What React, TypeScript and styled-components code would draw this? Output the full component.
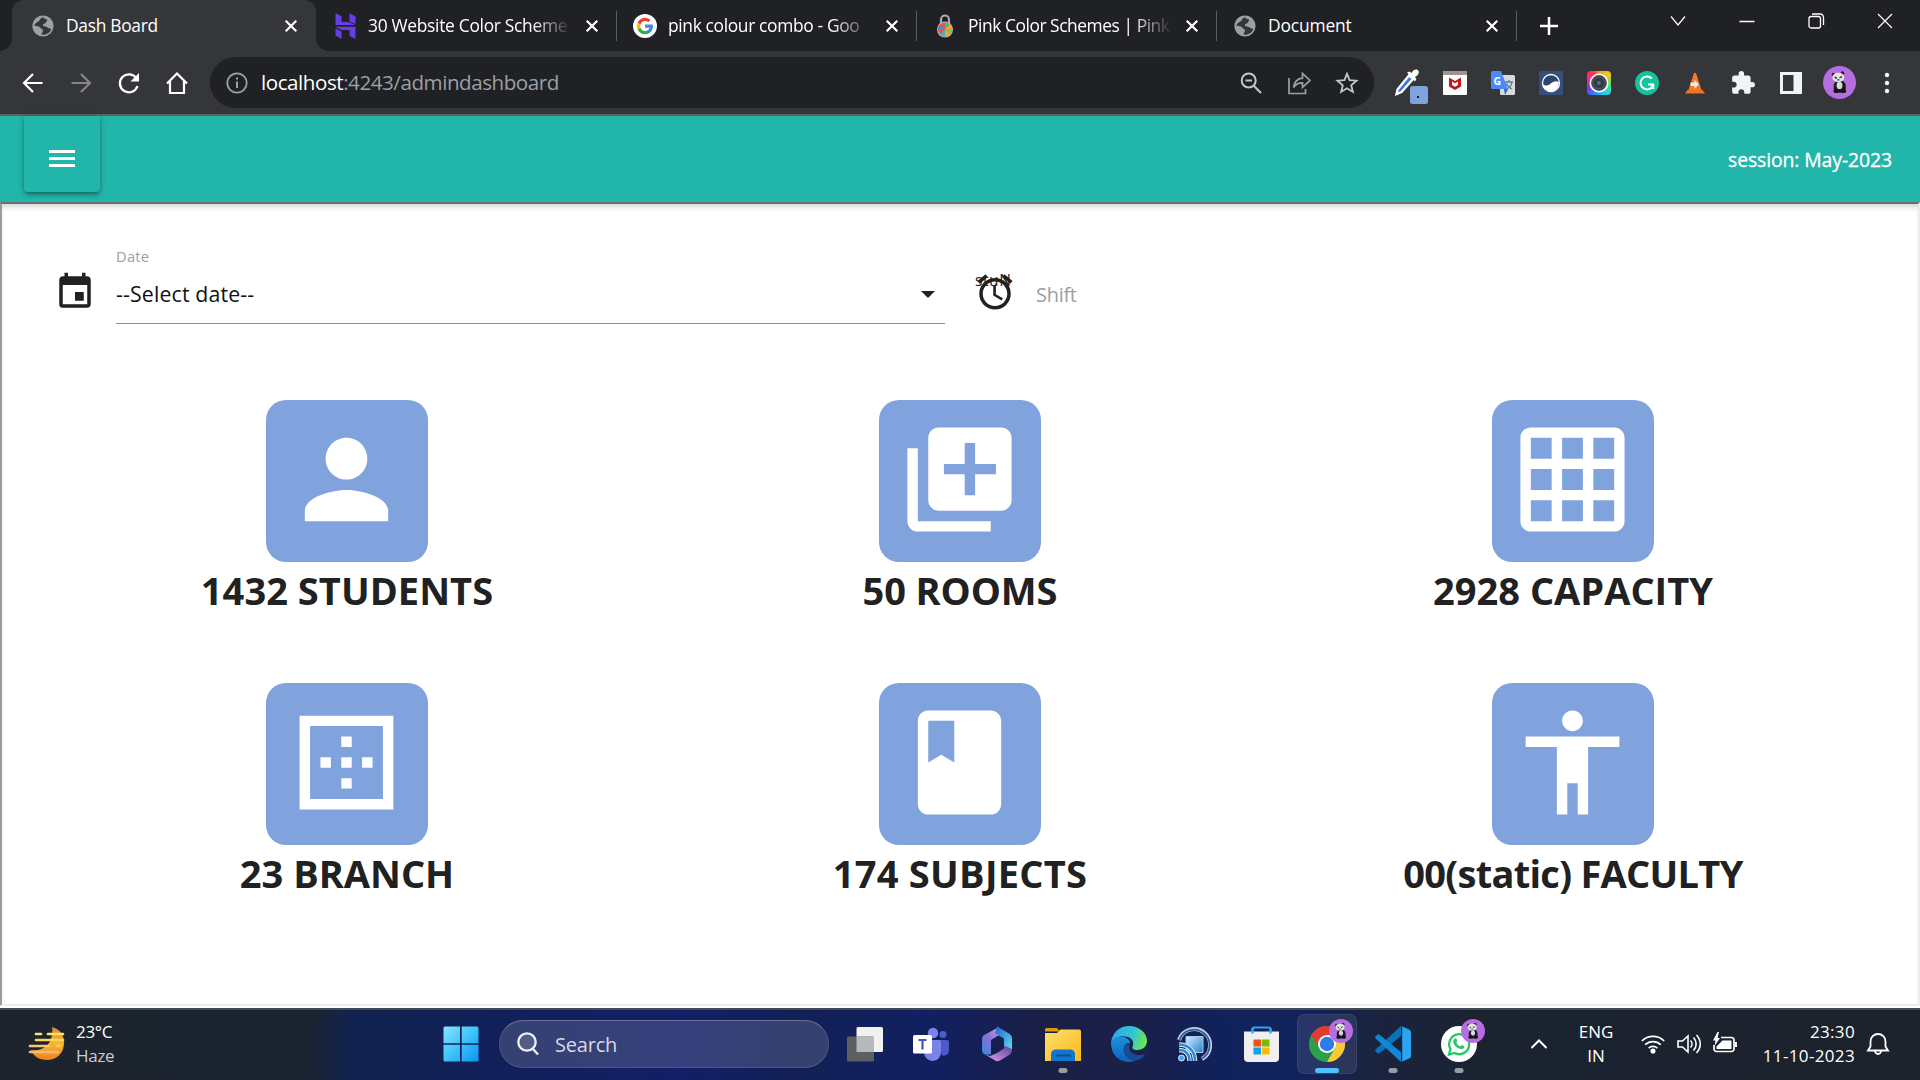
import React from "react";
import styled, { createGlobalStyle } from "styled-components";
import {
  MdPerson,
  MdLibraryAdd,
  MdGridOn,
  MdBorderOuter,
  MdBook,
  MdAccessibility,
  MdEvent,
  MdAccessAlarm,
  MdExtension,
} from "react-icons/md";

const Global = createGlobalStyle`
  * { box-sizing: border-box; }
  body { margin: 0; background: #fff; }
  svg { display: block; flex: none; overflow: visible; }
`;

const Screen = styled.div`
  width: 1920px;
  height: 1080px;
  display: flex;
  flex-direction: column;
  overflow: hidden;
  font-family: "Open Sans", "Noto Sans", sans-serif;
`;

/* ---------- browser tabs ---------- */

const TabStrip = styled.div`
  height: 51px;
  flex: none;
  display: flex;
  align-items: stretch;
  background: #202124;
  padding-left: 12px;
`;

const Tab = styled.div<{ $active?: boolean }>`
  position: relative;
  flex: none;
  width: ${(p) => (p.$active ? 304 : 300)}px;
  padding: 0 ${(p) => (p.$active ? 19 : 18)}px 0 ${(p) => (p.$active ? 19 : 17)}px;
  display: flex;
  align-items: center;
  background: ${(p) => (p.$active ? "#35363a" : "transparent")};
  border-radius: 12px 12px 0 0;
  ${(p) =>
    p.$active
      ? `
    &::before, &::after {
      content: "";
      position: absolute;
      bottom: 0;
      width: 12px;
      height: 12px;
    }
    &::before { left: -12px; background: radial-gradient(circle at 0 0, transparent 11.5px, #35363a 12px); }
    &::after { right: -12px; background: radial-gradient(circle at 100% 0, transparent 11.5px, #35363a 12px); }
  `
      : ""}
`;

const TabRule = styled.div`
  flex: none;
  width: 1px;
  height: 30px;
  margin: 11px -1px 0 0;
  background: #5a5c60;
`;

const Favicon = styled.div`
  flex: none;
  width: 24px;
  display: flex;
  justify-content: center;
`;

const TabTitle = styled.div<{ $spacing: number; $fade?: boolean }>`
  flex: 1;
  margin-left: 11px;
  padding-bottom: 2px;
  white-space: nowrap;
  color: #fff;
  font-size: 17.4px;
  line-height: 28px;
  letter-spacing: ${(p) => p.$spacing}px;
  ${(p) => (p.$fade ? "mask-image: linear-gradient(90deg, #000 164px, transparent 204px);" : "")}
`;

const WindowControls = styled.div`
  display: flex;
  align-items: center;
  margin-left: 111px;
  height: 42px;
  gap: 51px;
`;

const NewTab = styled.div`
  display: flex;
  align-items: center;
  margin-left: 24px;
`;

/* ---------- toolbar ---------- */

const Toolbar = styled.div`
  height: 65px;
  flex: none;
  display: flex;
  align-items: center;
  background: #35363a;
  border-bottom: 2px solid #5f6062;
`;

const NavButtons = styled.div`
  display: flex;
  width: 210px;
  padding-left: 21px;
  gap: 24px;
`;

const Omnibox = styled.div`
  width: 1164px;
  height: 51px;
  border-radius: 26px;
  background: #202124;
  display: flex;
  align-items: center;
  padding: 0 15px;
`;

const Url = styled.div`
  flex: 1;
  margin-left: 12px;
  padding-bottom: 2px;
  color: #fff;
  font-size: 20.6px;
  letter-spacing: -0.46px;
  line-height: 30px;
  span { color: #9aa0a6; }
`;

const OmniActions = styled.div`
  display: flex;
  gap: 24px;
`;

const Extensions = styled.div`
  display: flex;
  padding-left: 9px;
`;

const ExtCell = styled.div`
  width: 48px;
  height: 48px;
  display: flex;
  align-items: center;
  justify-content: center;
`;

/* ---------- page ---------- */

const Header = styled.header`
  height: 86px;
  flex: none;
  display: flex;
  justify-content: space-between;
  background: #22b5a9;
  padding: 0 28px 0 24px;
`;

const MenuButton = styled.button`
  width: 76px;
  height: 76px;
  padding: 10px 0 0;
  border: 0;
  border-radius: 0 0 4px 4px;
  background: #22b5a9;
  color: #fff;
  display: flex;
  justify-content: center;
  align-items: center;
  padding: 10px 0 0;
  box-shadow: 0 3px 4px -1px rgba(0, 0, 0, 0.35), 0 1px 6px rgba(0, 0, 0, 0.2);
`;

const Bars = styled.span`
  width: 26px;
  height: 17px;
  margin-top: -1px;
  display: flex;
  flex-direction: column;
  justify-content: space-between;
  i { height: 3px; background: #fff; }
`;

const Session = styled.div`
  color: #fff;
  font-size: 19.4px;
  line-height: 28px;
  letter-spacing: -0.1px;
  margin-top: 30px;
  -webkit-text-stroke: 0.3px #fff;
`;

const Frame = styled.main`
  height: 804px;
  flex: none;
  border: 2px solid;
  border-color: #6d6d6d #ececec #ececec #9a9a9a;
  background: #fff;
  box-shadow: inset 0 5px 5px -2px rgba(0, 0, 0, 0.16);
`;

const Gap = styled.div`
  height: 2px;
  flex: none;
  background: #fff;
`;

const Filters = styled.div`
  display: flex;
  height: 196px;
  padding: 38px 0 0 52px;
`;

const IconSlot = styled.div`
  position: relative;
  margin-top: 29px;
  color: #212121;
`;

const SelectField = styled.div`
  width: 829px;
  height: 82px;
  margin-left: 20px;
  border-bottom: 1px solid #8f8f8f;
`;

const FieldLabel = styled.div`
  color: #9e9e9e;
  font-size: 14.8px;
  line-height: 20px;
  padding-top: 4px;
  letter-spacing: 0.2px;
`;

const FieldValue = styled.div`
  display: flex;
  justify-content: space-between;
  align-items: center;
  padding-right: 10px;
  margin-top: 13px;
  color: #111;
  font-size: 21.3px;
  line-height: 30px;
  letter-spacing: 0.15px;
`;

const Caret = styled.i`
  border: 7px solid transparent;
  border-top-color: #212121;
  border-bottom: 0;
`;

const AlarmSlot = styled(IconSlot)`
  margin-left: 29px;
  width: 42px;
`;

const GhostText = styled.span`
  position: absolute;
  left: 1px;
  top: -1px;
  font-size: 15.5px;
  letter-spacing: 0.6px;
  line-height: 20px;
  color: #222;
`;

const ShiftLabel = styled.div`
  margin: 40px 0 0 20px;
  color: #9e9e9e;
  font-size: 20px;
  letter-spacing: -0.3px;
  line-height: 26px;
`;

const Stats = styled.section`
  display: grid;
  grid-template-columns: repeat(3, 613px);
  grid-auto-rows: 283px;
  justify-content: center;
`;

const Stat = styled.div`
  display: flex;
  flex-direction: column;
  align-items: center;
`;

const Tile = styled.div`
  width: 162px;
  height: 162px;
  border-radius: 20px;
  background: #80a3dd;
  color: #fff;
  display: flex;
  align-items: center;
  justify-content: center;
  padding: 0 1px 3px 0;
`;

const StatName = styled.h1<{ $spacing: number }>`
  margin: 2px 0 0;
  font-size: 38px;
  line-height: 52px;
  font-weight: 700;
  color: #212121;
  white-space: nowrap;
  letter-spacing: ${(p) => p.$spacing}px;
`;

/* ---------- taskbar ---------- */

const Taskbar = styled.footer`
  height: 72px;
  flex: none;
  display: flex;
  align-items: center;
  padding-bottom: 2px;
  border-top: 2px solid #424a56;
  background: linear-gradient(
    90deg,
    #1e242e 0,
    #1b2430 310px,
    #12234f 350px,
    #11205a 500px,
    #131f66 680px,
    #132056 800px,
    #122062 930px,
    #191f45 1040px,
    #1a2048 1130px,
    #112159 1210px,
    #12225a 1310px,
    #1a2340 1370px,
    #1b2331 1480px,
    #1d222b 1920px
  );
`;

const Weather = styled.div`
  width: 435px;
  padding-left: 28px;
  display: flex;
  align-items: center;
  gap: 10px;
`;

const TwoLines = styled.div<{ $spacing?: number }>`
  color: #fff;
  font-size: 17px;
  line-height: 24px;
  letter-spacing: ${(p) => p.$spacing ?? -0.3}px;
  white-space: nowrap;
  em { font-style: normal; color: #c9ccd2; }
`;

const Language = styled(TwoLines)`
  width: 60px;
  margin: 0 15px 0 18px;
  text-align: center;
`;

const Clock = styled(TwoLines)`
  width: 94px;
  margin-right: 12px;
  display: flex;
  flex-direction: column;
  align-items: flex-end;
`;

const StartButton = styled.div`
  width: 64px;
  padding-left: 8px;
`;

const SearchBox = styled.div`
  width: 330px;
  height: 48px;
  border-radius: 24px;
  border: 1px solid rgba(255, 255, 255, 0.12);
  border-top-color: rgba(255, 255, 255, 0.25);
  background: rgba(255, 255, 255, 0.15);
  display: flex;
  align-items: center;
  padding-left: 17px;
  gap: 16px;
  color: #d8dae4;
  font-size: 20px;
  letter-spacing: -0.2px;
`;

const Apps = styled.div`
  display: flex;
  margin-left: 3px;
`;

const AppCell = styled.div<{ $active?: boolean }>`
  position: relative;
  width: 60px;
  height: 60px;
  margin: 0 3px;
  border-radius: 7px;
  display: flex;
  align-items: center;
  justify-content: center;
  background: ${(p) => (p.$active ? "rgba(255,255,255,0.09)" : "transparent")};
  box-shadow: ${(p) => (p.$active ? "inset 0 0 0 1px rgba(255,255,255,0.07)" : "none")};
`;

const Indicator = styled.i<{ $active?: boolean }>`
  position: absolute;
  left: 50%;
  bottom: 1px;
  width: ${(p) => (p.$active ? 24 : 9)}px;
  height: 5px;
  border-radius: 3px;
  transform: translateX(-50%);
  background: ${(p) => (p.$active ? "#4cc2ff" : "#9a9ca3")};
`;

const Badge = styled.div`
  position: absolute;
  right: 4px;
  top: 5px;
`;

const Tray = styled.div`
  display: flex;
  align-items: center;
  margin-left: auto;
  padding-right: 31px;
`;

const TrayIcons = styled.div`
  display: flex;
  gap: 12px;
  margin-right: 24px;
`;

/* ---------- drawings ---------- */

const Globe = () => (
  <svg width="22" height="22" viewBox="0 0 22 22">
    <circle cx="11" cy="11" r="10.6" fill="#9aa0a6" />
    <path
      d="M11.5 2.2C8 2.8 8.2 5 6.8 6.3 5 7.6 2.8 8 2.4 10.5c2 .9 4.200.2 5.800 2 .9 1.600 2.900 1.400 2.800 3.400-.2 1.600-1.600 1.800-1.500 3.700 4 .8 8.600-1.500 9.700-5.600-1.800-1-2.700-.4-3.900-1.700-1.200-1.200-3.300-.4-4.200-1.500-.8-1.300.3-2.200 1.900-2.400 1.300-.3.800-1.800 1.900-2.400 1-.6-.2-1.900-1.200-2.100-1.500-.2-2.400-.7-2.200-1.700z"
      fill="#35363a"
    />
  </svg>
);

const HostingerIcon = () => (
  <svg width="21" height="26" viewBox="0 0 21 26" fill="#673de6">
    <path d="M.5 0 6.500 3.300V9h7.800l5.700 3H.5zM14.500 0l6 3.500v7.800l-6-3zM.5 13.700l5.300 0h14.700V26l-6-3.200V17H6.600L.5 14zM.5 15.300l6 3.200V26l-6-3.400z" />
  </svg>
);

const GoogleMark = () => (
  <>
    <path d="M21.600 12.200c0-.7-.1-1.400-.2-2H12v3.900h5.400a4.600 4.600 0 0 1-2 3v2.500h3.200c1.900-1.700 3-4.300 3-7.400z" fill="#4285f4" />
    <path d="M12 22c2.700 0 5-.9 6.600-2.400l-3.200-2.500c-.9.6-2 1-3.400 1-2.600 0-4.800-1.800-5.600-4.100H3.100v2.600A10 10 0 0 0 12 22z" fill="#34a853" />
    <path d="M6.400 14a6 6 0 0 1 0-3.900V7.500H3.100a10 10 0 0 0 0 9z" fill="#fbbc05" />
    <path d="M12 6c1.500 0 2.800.5 3.800 1.500l2.900-2.900A10 10 0 0 0 3.100 7.500l3.300 2.600C7.200 7.800 9.400 6 12 6z" fill="#ea4335" />
  </>
);

const GoogleIcon = () => (
  <svg width="24" height="24" viewBox="0 0 24 24">
    <circle cx="12" cy="12" r="12" fill="#fff" />
    <g transform="translate(2.200 2.200) scale(.82)">
      <GoogleMark />
    </g>
  </svg>
);

const LockWheel = () => (
  <svg width="18" height="24" viewBox="0 0 18 24">
    <path d="M5 11V5.500a4 4 0 0 1 8 0V11" fill="none" stroke="#aaa" strokeWidth="2.200" />
    <circle cx="9" cy="15.500" r="8" fill="#bbb" />
    <circle cx="9" cy="15.500" r="7" fill="#e9573f" />
    <path d="M9 15.500 9 8.500A7 7 0 0 1 14 10.500z" fill="#37bc9b" />
    <path d="M9 15.500 16 15.500A7 7 0 0 1 14 20.500z" fill="#8cc152" />
    <path d="M9 15.500 14 20.500A7 7 0 0 1 9 22.500z" fill="#f6a623" />
    <path d="M9 15.500 9 22.500A7 7 0 0 1 4 20.500z" fill="#3bafda" />
    <path d="M9 15.500 2 15.500A7 7 0 0 1 4 10.500z" fill="#4a89dc" />
    <path d="M9 15.500 14 10.500A7 7 0 0 1 16 15.500z" fill="#f6a623" />
  </svg>
);

const CloseX = () => (
  <svg width="12" height="12" viewBox="0 0 12 12" stroke="#fff" strokeWidth="2.200">
    <path d="M.7.7l10.600 10.600M11.300.7.7 11.300" />
  </svg>
);

const stroke = (color: string, w: number) => ({
  fill: "none",
  stroke: color,
  strokeWidth: w,
});

const Panda = ({ size }: { size: number }) => (
  <svg width={size} height={size} viewBox="0 0 34 34">
    <circle cx="17" cy="17" r="17" fill="#b56ee0" />
    <path d="M11 21c0-4 2.500-6 6-6s6.500 2 6.500 6c0 3-.3 5-1 6.500h-10.500C11.300 26 11 24 11 21z" fill="#1c1c1e" />
    <ellipse cx="17" cy="20" rx="3" ry="3.800" fill="#d9dadc" />
    <ellipse cx="13.300" cy="26" rx="2.700" ry="1.800" fill="#111" />
    <ellipse cx="21.300" cy="26" rx="2.700" ry="1.800" fill="#111" />
    <circle cx="10.800" cy="8.800" r="1.900" fill="#222" />
    <circle cx="20" cy="7.400" r="1.900" fill="#222" />
    <ellipse cx="15.800" cy="11.800" rx="6.200" ry="4.900" fill="#e3e3e3" />
    <path d="M12 11.500l2.300 1.300M17 12.100l2.500-1.200M14.800 14.300h2" stroke="#222" strokeWidth="1.300" />
  </svg>
);

const Eyedropper = () => (
  <svg width="28" height="36" viewBox="6 0 28 36">
    <g transform="translate(6 1)">
      <path d="M4.500 23.500 16 9.500l4 3.500L8.500 26 3.500 28z" fill="#3c78d8" stroke="#fff" strokeWidth="2.300" />
      <path d="M14 6.500l2.500-1 2 1.600c2-4.200 6-4.300 7-2 .8 2-.3 4.500-3.600 6l1.500 2-1.500 2.500z" fill="#fff" />
      <rect x="17" y="20" width="18" height="18" rx="2.500" fill="#80a3dd" />
      <rect x="24" y="30" width="2" height="2" fill="#16202e" />
    </g>
  </svg>
);

const McAfee = () => (
  <svg width="24" height="24" viewBox="0 0 24 24">
    <rect width="24" height="24" rx="1" fill="#fff" />
    <path d="M0 0h24v4H0z" fill="#9c9694" />
    <path d="M6 6.500l6 3.500 6-3.500v9L12 19l-6-3.500zM9 10.500v3.600l3 1.700 3-1.700v-3.600l-3 1.700z" fill="#c5161d" fillRule="evenodd" />
  </svg>
);

const GlyphText = styled.text`
  font-family: "Open Sans", "Noto Sans CJK SC", sans-serif;
  font-weight: 700;
`;

const Translate = () => (
  <svg width="24" height="24" viewBox="0 0 24 24">
    <rect x="9" y="4" width="15" height="20" rx="1.500" fill="#d8dadd" />
    <path d="M14 11h8M18 9v2M21 11c-.5 3-3 6-5.500 7M15.500 12.500c1 2.500 3 4.500 5.500 5.500" stroke="#5f7f86" strokeWidth="1.300" fill="none" />
    <path d="M13 18h4l-3 6z" fill="#3a5bc7" />
    <path d="M1.500 0H10l7 18H1.500A1.500 1.500 0 0 1 0 16.500v-15A1.500 1.500 0 0 1 1.500 0z" fill="#4c8bf5" />
    <GlyphText x="2.500" y="13.500" fontSize="10.500" fill="#fff">G</GlyphText>
  </svg>
);

const Sphere = () => (
  <svg width="24" height="24" viewBox="0 0 24 24">
    <rect width="24" height="24" rx="1" fill="#344f7c" />
    <circle cx="12" cy="12" r="8.500" fill="#2d4671" stroke="#fff" strokeWidth="1.300" />
    <path d="M3.700 13c3 2.500 5.800 1.800 8-.4 2-2 5-3.300 8.200-1.600A8 8 0 0 1 3.700 13z" fill="#fff" />
  </svg>
);

const Rainbow = styled.div`
  width: 24px;
  height: 24px;
  border-radius: 4px;
  background: conic-gradient(from 0deg, #ff9b1a, #f7c51e 50deg, #58e06c 90deg, #21d8e0 140deg, #2c7df0 210deg, #7f38f0 240deg, #ff1f9c 290deg, #ff3a3a 335deg, #ff9b1a);
`;

const Lens = () => (
  <Rainbow>
    <svg width="24" height="24" viewBox="0 0 24 24">
      <circle cx="12" cy="12" r="8.700" fill="#474c57" stroke="#fff" strokeWidth="1.600" />
      <circle cx="12" cy="12" r="5" fill="#2b3d49" />
      <circle cx="12" cy="12" r="2" fill="#596c7a" />
    </svg>
  </Rainbow>
);

const Grammarly = () => (
  <svg width="24" height="24" viewBox="0 0 24 24">
    <circle cx="12" cy="12" r="12" fill="#15c39a" />
    <path d="M16.800 7.500A6.500 6.500 0 1 0 18 14.500M13 13.500h5.200v4.500" {...stroke("#fff", 2)} />
  </svg>
);

const Vlc = () => (
  <svg width="20" height="22" viewBox="0 0 20 22">
    <path d="M9 1h2l5.500 17H3.500z" fill="#f07c28" />
    <path d="M2.500 18h15l2.500 3.500H0z" fill="#ee7420" />
    <path d="M5.500 10.500h4V7.800l4.500 4.700-4.500 4.300V14h-4z" fill="#e9e9ea" />
  </svg>
);

const SidePanel = () => (
  <svg width="22" height="22" viewBox="0 0 22 22">
    <path d="M0 0h22v22H0zM3 3v16h10.500V3z" fill="#f1f3f4" fillRule="evenodd" />
  </svg>
);

const Haze = () => (
  <svg width="38" height="36" viewBox="0 0 38 36">
    <defs>
      <linearGradient id="moon" x1="0" y1="0" x2="0" y2="1">
        <stop offset="0" stopColor="#d98a3c" />
        <stop offset=".5" stopColor="#f5b928" />
        <stop offset="1" stopColor="#f07f1b" />
      </linearGradient>
    </defs>
    <path d="M24 1c8 2 12 8 12 16 0 10-7 17-17 17-8 0-14-4-16-10 14 2 23-8 21-23z" fill="url(#moon)" />
    <g strokeWidth="2.700" strokeLinecap="round">
      <path d="M8 8h5M20 8h15" stroke="#ffdf73" />
      <path d="M8 14h27" stroke="#ffd35c" />
      <path d="M2 20h19M29 20h3" stroke="#f6c878" />
      <path d="M2 26h28" stroke="#f1ba7c" />
    </g>
  </svg>
);

const WindowsLogo = () => (
  <svg width="36" height="36" viewBox="0 0 36 36">
    <defs>
      <linearGradient id="win" x1="0" y1="0" x2="1" y2="1">
        <stop offset="0" stopColor="#8be3ff" />
        <stop offset=".5" stopColor="#3fc3fa" />
        <stop offset="1" stopColor="#0a93f5" />
      </linearGradient>
    </defs>
    <path
      d="M2 .5h15v16.700H.5V2A1.500 1.500 0 0 1 2 .5zM18.700.5H34A1.500 1.500 0 0 1 35.500 2v15.200H18.700zM.5 18.800H17v16.700H2A1.500 1.500 0 0 1 .5 34zM18.700 18.800h16.800V34a1.500 1.500 0 0 1-1.500 1.500H18.700z"
      fill="url(#win)"
    />
  </svg>
);

const TaskView = () => (
  <svg width="36" height="36" viewBox="0 0 36 36">
    <rect x="9.500" y="1" width="26.500" height="25" rx="1.500" fill="#f1f1f1" />
    <rect x="0" y="10.500" width="27" height="25" rx="1.500" fill="#5e5f61" />
    <path d="M9.500 10.500H27V26H9.500z" fill="#b7b8ba" />
  </svg>
);

const Teams = () => (
  <svg width="36" height="36" viewBox="0 0 36 36">
    <circle cx="30" cy="8.500" r="3.600" fill="#5059c9" />
    <path d="M25 14h9a2 2 0 0 1 2 2v8c0 4-3 6-7 5.500z" fill="#5059c9" />
    <circle cx="20" cy="7" r="5.200" fill="#7b83eb" />
    <path d="M12 14h14a2 2 0 0 1 2 2v10a8.500 8.500 0 0 1-17 1z" fill="#7b83eb" />
    <rect x="0" y="9" width="19" height="18.500" rx="1.500" fill="#fff" />
    <path d="M5.500 14h8M9.500 14v9.500" stroke="#4b53bc" strokeWidth="2.200" />
  </svg>
);

const M365 = () => (
  <svg width="34" height="36" viewBox="0 0 34 36">
    <defs>
      <linearGradient id="ma" x1="1" y1="0" x2="0" y2="1">
        <stop offset="0" stopColor="#b9a2f5" />
        <stop offset=".5" stopColor="#8a6fd6" />
        <stop offset="1" stopColor="#2a8fe0" />
      </linearGradient>
      <linearGradient id="mb" x1="0" y1="0" x2="1" y2="1">
        <stop offset="0" stopColor="#2660c9" />
        <stop offset="1" stopColor="#59e2f5" />
      </linearGradient>
      <linearGradient id="mc" x1="0" y1="1" x2="1" y2="0">
        <stop offset="0" stopColor="#e3a1f5" />
        <stop offset="1" stopColor="#574196" />
      </linearGradient>
    </defs>
    <path d="M19 1 5 8.500Q2 10 2 13v11q0 3 3 4.500l6 0V14l8-5z" fill="url(#ma)" />
    <path d="M17 .5l12 7q3 2 3 5v12l-8-4v-8l-9-5z" fill="url(#mb)" />
    <path d="M5 28.500 16 35q2 .6 4-.5l9-5.500q3-2 3-6l-8-3.500v3l-7 4.500-7 3z" fill="url(#mc)" />
  </svg>
);

const Folder = () => (
  <svg width="36" height="36" viewBox="0 0 36 36">
    <defs>
      <linearGradient id="fo" x1="0" y1="0" x2="1" y2="1">
        <stop offset="0" stopColor="#ffdf70" />
        <stop offset="1" stopColor="#fbb917" />
      </linearGradient>
    </defs>
    <path d="M0 3.500A1.500 1.500 0 0 1 1.500 2H12l3 3.500H0z" fill="#dc9a06" />
    <path d="M0 7h12l3.500-3.500H34A2 2 0 0 1 36 5.500V35H0z" fill="url(#fo)" />
    <path d="M6 35V28a4.500 4.500 0 0 1 4.500-4.500h15A4.500 4.500 0 0 1 30 28v7z" fill="#1176cf" />
    <path d="M10 29.500h16" stroke="#0d4f92" strokeWidth="2" />
  </svg>
);

const Edge = () => (
  <svg width="36" height="36" viewBox="0 0 36 36">
    <defs>
      <linearGradient id="ea" x1="0" y1=".3" x2="1" y2=".5">
        <stop offset="0" stopColor="#2ba5ea" />
        <stop offset=".6" stopColor="#35c5d3" />
        <stop offset="1" stopColor="#6bea4c" />
      </linearGradient>
      <linearGradient id="eb" x1="0" y1="0" x2="0" y2="1">
        <stop offset="0" stopColor="#1a93dc" />
        <stop offset="1" stopColor="#1160bd" />
      </linearGradient>
    </defs>
    <path d="M0 17C1 7 8 0 18 0c10.500 0 18 7 18 15 0 5-4 9-9.500 9-4 0-6-1.500-5-3.500 1.700-3 .5-8-4.500-9.500C10 9 3 11 0 17z" fill="url(#ea)" />
    <path d="M0 17c2-5 8-7.500 13-6 4 1.200 6.500 4 6 6-3-.5-6 1.500-6 6 0 6 7 12 13 10.500-3 2-6 2.500-8.500 2.500C7 36 0 27.500 0 17z" fill="url(#eb)" />
    <path d="M19 17c-5 1-8 5-6 10 3 8 13 9 18 5 1.500-1.300 2.500-3 3-4.500-1.500 1-4 1.500-6.500 1.500-6 0-11-4-8.500-12z" fill="#174b94" />
  </svg>
);

const Cast = () => (
  <svg width="36" height="36" viewBox="0 0 36 36">
    <defs>
      <linearGradient id="ca" x1="0" y1="0" x2="1" y2="1">
        <stop offset="0" stopColor="#d2efff" />
        <stop offset="1" stopColor="#267fcd" />
      </linearGradient>
    </defs>
    <path d="M2 14A16 16 0 1 1 25 33" {...stroke("#bfd0e4", 4)} />
    <path d="M2.500 14A15.500 15.500 0 1 1 25 32.500" {...stroke("#315da0", 1.800)} />
    <path d="M9 10.500h17v16H9z" fill="url(#ca)" stroke="#a8c8e8" strokeWidth="1" />
    <path d="M2 18.500c10 0 16 7 16 16.500M2 24c7 0 10.500 4.500 10.500 11" {...stroke("#dbe9f7", 4.500)} />
    <path d="M2 18.500c10 0 16 7 16 16.500M2 24c7 0 10.500 4.500 10.500 11" {...stroke("#2c8bd9", 2.500)} />
    <circle cx="4.500" cy="32" r="3" fill="#45a6ea" stroke="#dbe9f7" />
  </svg>
);

const Store = () => (
  <svg width="35" height="36" viewBox="0 0 35 36">
    <path d="M8.500 9V3a1.500 1.500 0 0 1 1.500-1.500h15A1.500 1.500 0 0 1 26.500 3v6" {...stroke("#22a8f0", 2.200)} />
    <path d="M0 5.500h35V32a4 4 0 0 1-4 4H4a4 4 0 0 1-4-4z" fill="#efefef" />
    <path d="M8.500 2v5.500M26.500 2v5.500" stroke="#22a8f0" strokeWidth="2.200" />
    <path d="M9.500 13.500h7.500v7H9.500z" fill="#f04e1f" />
    <path d="M18 13.500h7.500v7H18z" fill="#7eb801" />
    <path d="M9.500 21.500h7.500v7H9.500z" fill="#0ba3ed" />
    <path d="M18 21.500h7.500v7H18z" fill="#fcb80b" />
  </svg>
);

const Chrome = () => (
  <svg width="36" height="36" viewBox="0 0 36 36">
    <circle cx="18" cy="18" r="18" fill="#2aa14a" />
    <path d="M18 9h15.600A18 18 0 0 1 18 36l7.800-13.500z" fill="#fcc934" />
    <path d="M2.400 9A18 18 0 0 1 33.600 9H18L10.200 22.500z" fill="#e33b2e" />
    <circle cx="18" cy="18" r="9" fill="#fff" />
    <circle cx="18" cy="18" r="7.200" fill="#2b7de9" />
  </svg>
);

const VsCode = () => (
  <svg width="36" height="36" viewBox="0 0 36 36">
    <path d="M26 0v10L4.500 27.300a1.500 1.500 0 0 1-2 0L.6 25.600a1.500 1.500 0 0 1 0-2.200z" fill="#0a73ba" />
    <path d="M26 36V26L4.500 8.700a1.500 1.500 0 0 0-2 0L.6 10.400a1.500 1.500 0 0 0 0 2.200z" fill="#0f87d2" />
    <path d="M26 0l8.500 3.700A2.500 2.500 0 0 1 36 6v24a2.500 2.500 0 0 1-1.500 2.300L26 36c1-.5 1.200-1.500 1.200-3V3c0-1.500-.2-2.500-1.200-3z" fill="#2aa5f2" />
  </svg>
);

const WhatsApp = () => (
  <svg width="36" height="36" viewBox="0 0 36 36">
    <circle cx="18" cy="18" r="18" fill="#fff" />
    <path d="M8 28.500l1.500-5.400A10 10 0 1 1 13.500 27z" {...stroke("#25c768", 2.300)} />
    <path d="M14 12.500c1-.7 1.600 0 2.200 2 .3 1-.9 1.500-.9 2 .9 2 2.200 3.100 4 3.900.7 0 1.200-1.400 1.900-1.300 2.300 1 2.400 1.300 2 2.300-1 2-3.500 2-6 .8-3-1.500-5-4.500-5-6.800 0-1.500.8-2.300 1.800-2.900z" fill="#25c768" />
  </svg>
);

/* ---------- data ---------- */

const tabs = [
  { title: "Dash Board", icon: <Globe />, spacing: -0.3, active: true },
  { title: "30 Website Color Scheme", icon: <HostingerIcon />, spacing: -0.3, fade: true },
  { title: "pink colour combo - Goo", icon: <GoogleIcon />, spacing: -0.35, fade: true },
  { title: "Pink Color Schemes | Pink", icon: <LockWheel />, spacing: -0.45, fade: true },
  { title: "Document", icon: <Globe />, spacing: -0.15 },
];

const stats = [
  { label: "1432 STUDENTS", Icon: MdPerson, spacing: 0.05 },
  { label: "50 ROOMS", Icon: MdLibraryAdd, spacing: -0.1 },
  { label: "2928 CAPACITY", Icon: MdGridOn, spacing: 0 },
  { label: "23 BRANCH", Icon: MdBorderOuter, spacing: 0 },
  { label: "174 SUBJECTS", Icon: MdBook, spacing: 0.28 },
  { label: "00(static) FACULTY", Icon: MdAccessibility, spacing: -0.72 },
];

const extensions = [
  <Eyedropper />,
  <McAfee />,
  <Translate />,
  <Sphere />,
  <Lens />,
  <Grammarly />,
  <Vlc />,
  <MdExtension size={26} color="#f1f3f4" />,
  <SidePanel />,
  <Panda size={33} />,
  <svg width="6" height="22" viewBox="0 0 6 22" fill="#f1f3f4">
    <circle cx="3" cy="3" r="2.200" />
    <circle cx="3" cy="11" r="2.200" />
    <circle cx="3" cy="19" r="2.200" />
  </svg>,
];

const apps = [
  { icon: <TaskView /> },
  { icon: <Teams /> },
  { icon: <M365 /> },
  { icon: <Folder />, running: true },
  { icon: <Edge /> },
  { icon: <Cast /> },
  { icon: <Store /> },
  { icon: <Chrome />, running: true, active: true, badge: true },
  { icon: <VsCode />, running: true },
  { icon: <WhatsApp />, running: true, badge: true },
];

export default function App() {
  return (
    <Screen>
      <Global />
      <TabStrip>
        {tabs.map((t) => (
          <React.Fragment key={t.title}>
            <Tab $active={t.active}>
              <Favicon>{t.icon}</Favicon>
              <TabTitle $spacing={t.spacing} $fade={t.fade}>{t.title}</TabTitle>
              <CloseX />
            </Tab>
            {!t.active && <TabRule />}
          </React.Fragment>
        ))}
        <NewTab>
          <svg width="18" height="18" viewBox="0 0 18 18" {...stroke("#fff", 2.500)}>
            <path d="M9 0v18M0 9h18" />
          </svg>
        </NewTab>
        <WindowControls>
          <svg width="18" height="18" viewBox="0 0 18 18" {...stroke("#fff", 1.200)}><path d="M2 4.500l7 8.500 7-8.500" /></svg>
          <svg width="18" height="18" viewBox="0 0 18 18" {...stroke("#fff", 1.500)}><path d="M1.500 9.500h15" /></svg>
          <svg width="18" height="18" viewBox="0 0 18 18" {...stroke("#fff", 1.300)}>
            <rect x="2" y="4.500" width="11.500" height="11.500" rx="2" />
            <path d="M5 2h8a3.500 3.500 0 0 1 3.500 3.500V13" />
          </svg>
          <svg width="18" height="18" viewBox="0 0 18 18" {...stroke("#fff", 1.200)}><path d="M2 2l14 14M16 2 2 16" /></svg>
        </WindowControls>
      </TabStrip>

      <Toolbar>
        <NavButtons>
          <svg width="24" height="24" viewBox="0 0 24 24" {...stroke("#fff", 2.200)}><path d="M21.500 12H3.500M12 3l-9 9 9 9" /></svg>
          <svg width="24" height="24" viewBox="0 0 24 24" {...stroke("#85868a", 2.200)}><path d="M2.500 12h18M12 3l9 9-9 9" /></svg>
          <svg width="24" height="24" viewBox="0 0 24 24">
            <path d="M19.500 7.500A9 9 0 1 0 20.500 15" {...stroke("#fff", 2.300)} />
            <path d="M22 2v8.500h-8.500z" fill="#fff" />
          </svg>
          <svg width="24" height="24" viewBox="0 0 24 24" {...stroke("#fff", 2.200)}><path d="M2 12.500 12 2.500l10 10M5 10v12h14V10" /></svg>
        </NavButtons>
        <Omnibox>
          <svg width="24" height="24" viewBox="0 0 24 24">
            <circle cx="12" cy="12" r="9.700" {...stroke("#9aa0a6", 1.800)} />
            <path d="M12 10.500V17M12 6.500v2" {...stroke("#9aa0a6", 2)} />
          </svg>
          <Url>localhost<span>:4243/admindashboard</span></Url>
          <OmniActions>
            <svg width="24" height="24" viewBox="0 0 24 24" {...stroke("#c4c7ca", 2)}>
              <circle cx="9.700" cy="9.500" r="7" /><path d="M14.700 14.700 22 22" /><path d="M6.500 9.500h6.500" />
            </svg>
            <svg width="24" height="24" viewBox="0 0 24 24" {...stroke("#9aa0a6", 1.700)}>
              <path d="M2 7v15.500h16.500V18" /><path d="M6.500 16.500C7.500 10.500 11 7.500 15.500 7.200V2.500l7.500 7-7.500 6.800v-4.500c-4-.2-6.700 1.200-9 4.700z" />
            </svg>
            <svg width="24" height="24" viewBox="0 0 24 24" {...stroke("#c4c7ca", 1.800)}>
              <path d="M12 2.800l2.600 6.400 6.900.5-5.300 4.500 1.700 6.700L12 17.300l-5.900 3.600 1.700-6.700L2.500 9.700l6.900-.5z" />
            </svg>
          </OmniActions>
        </Omnibox>
        <Extensions>
          {extensions.map((e, i) => <ExtCell key={i}>{e}</ExtCell>)}
        </Extensions>
      </Toolbar>

      <Header>
        <MenuButton><Bars><i /><i /><i /></Bars></MenuButton>
        <Session>session: May-2023</Session>
      </Header>

      <Frame>
        <Filters>
          <IconSlot><MdEvent size={42} /></IconSlot>
          <SelectField>
            <FieldLabel>Date</FieldLabel>
            <FieldValue>--Select date--<Caret /></FieldValue>
          </SelectField>
          <AlarmSlot>
            <MdAccessAlarm size={42} />
            <GhostText>stuN</GhostText>
          </AlarmSlot>
          <ShiftLabel>Shift</ShiftLabel>
        </Filters>
        <Stats>
          {stats.map(({ label, Icon, spacing }) => (
            <Stat key={label}>
              <Tile><Icon size={125} /></Tile>
              <StatName $spacing={spacing}>{label}</StatName>
            </Stat>
          ))}
        </Stats>
      </Frame>
      <Gap />

      <Taskbar>
        <Weather>
          <Haze />
          <TwoLines>23°C<br /><em>Haze</em></TwoLines>
        </Weather>
        <StartButton><WindowsLogo /></StartButton>
        <SearchBox>
          <svg width="22" height="24" viewBox="0 0 22 24" {...stroke("#eef0f5", 2.300)}>
            <circle cx="10" cy="10" r="8.700" fill="rgba(255,255,255,.15)" /><path d="M15.500 16.500l5.500 6" />
          </svg>
          Search
        </SearchBox>
        <Apps>
          {apps.map((a, i) => (
            <AppCell key={i} $active={a.active}>
              {a.icon}
              {a.badge && <Badge><Panda size={24} /></Badge>}
              {a.running && <Indicator $active={a.active} />}
            </AppCell>
          ))}
        </Apps>
        <Tray>
          <svg width="18" height="12" viewBox="0 0 18 12" {...stroke("#fff", 2)}><path d="M1.500 10 9 2.500l7.500 7.500" /></svg>
          <Language $spacing={0}>ENG<br />IN</Language>
          <TrayIcons>
            <svg width="24" height="24" viewBox="0 0 24 24" {...stroke("#fff", 1.700)}>
              <path d="M.8 9a16 16 0 0 1 22.400 0M4.200 12.700a11.200 11.200 0 0 1 15.600 0M7.700 16.200a6.200 6.200 0 0 1 8.600 0" />
              <circle cx="12" cy="19" r="1.700" fill="#fff" />
            </svg>
            <svg width="24" height="24" viewBox="0 0 24 24" {...stroke("#fff", 1.600)}>
              <path d="M1 9h4.500L11 4v16l-5.500-5H1z" /><path d="M13.500 8.500c2 2 2 5 0 7M16.500 5.500c3.500 3.700 3.500 9.300 0 13M19.500 3c5 5.500 5 12.500 0 18" />
            </svg>
            <svg width="24" height="24" viewBox="0 0 24 24">
              <path d="M8 5.500h10.500A2.500 2.500 0 0 1 21 8v9a2.500 2.500 0 0 1-2.500 2.500h-15A2.500 2.500 0 0 1 1 17v-4" {...stroke("#fff", 1.700)} />
              <path d="M9.500 8.500h9v8.500H3.500v-2.500z" fill="#fff" />
              <path d="M22 10h2v5h-2z" fill="#fff" />
              <path d="M4.500 0 0 8.500h2.500L1.500 14 7 6H4.500L6 0z" fill="#fff" />
            </svg>
          </TrayIcons>
          <Clock $spacing={0.35}><span>23:30</span><span>11-10-2023</span></Clock>
          <svg width="22" height="24" viewBox="0 0 22 24" {...stroke("#fff", 1.800)}>
            <path d="M1 18.500l2.500-4V9.500a7.500 7.500 0 0 1 15 0v5l2.500 4zM8 19c.5 4 5.500 4 6 0" />
          </svg>
        </Tray>
      </Taskbar>
    </Screen>
  );
}
